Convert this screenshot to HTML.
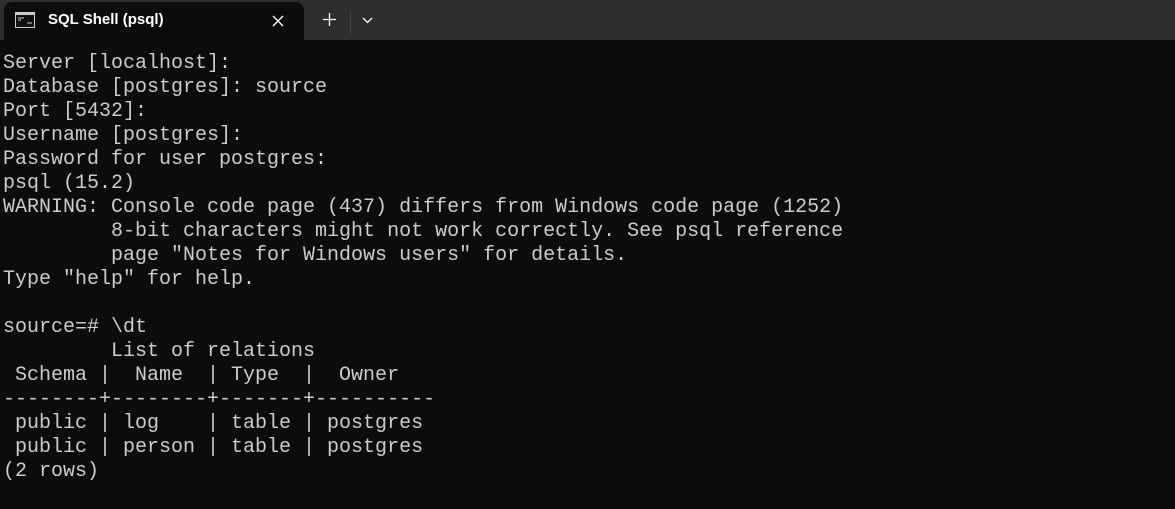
<!DOCTYPE html>
<html><head><meta charset="utf-8"><style>
html,body{margin:0;padding:0;width:1175px;height:509px;background:#0c0c0c;overflow:hidden}
.bar{position:absolute;left:0;top:0;width:1175px;height:40px;background:#2e2e2e}
.tab{position:absolute;left:4px;top:2px;width:300px;height:38px;background:#0c0c0c;border-radius:8px 8px 0 0}
.title{position:absolute;left:44px;top:9px;font:15px "Liberation Sans",sans-serif;color:#fff;font-weight:600}
.term{position:absolute;left:3px;top:52px;margin:0;font:20px/24px "Liberation Mono",monospace;color:#cccccc;white-space:pre}
</style></head><body>
<div class="bar">
<div class="tab">
<svg style="position:absolute;left:11px;top:10px" width="20" height="16" viewBox="0 0 20 16"><rect x="0.5" y="0.5" width="19" height="15" fill="#111" stroke="#ccc"/><rect x="1" y="1" width="18" height="2" fill="#ccc"/><path d="M3 6h6M3 8h3M12 11h5" stroke="#ccc" stroke-width="1"/></svg>
<div class="title">SQL Shell (psql)</div>
<svg style="position:absolute;left:268px;top:13px" width="12" height="12" viewBox="0 0 12 12"><path d="M1 1L11 11M11 1L1 11" stroke="#fff" stroke-width="1.3"/></svg>
</div>
<svg style="position:absolute;left:323px;top:13px" width="13" height="13" viewBox="0 0 13 13"><path d="M6.5 0V13M0 6.5H13" stroke="#fff" stroke-width="1.3"/></svg>
<div style="position:absolute;left:350px;top:10px;width:1px;height:24px;background:#444"></div>
<svg style="position:absolute;left:362px;top:17px" width="11" height="7" viewBox="0 0 11 7"><path d="M1 1L5.5 5.5L10 1" stroke="#fff" stroke-width="1.3" fill="none"/></svg>
</div>
<pre class="term">Server [localhost]:
Database [postgres]: source
Port [5432]:
Username [postgres]:
Password for user postgres:
psql (15.2)
WARNING: Console code page (437) differs from Windows code page (1252)
         8-bit characters might not work correctly. See psql reference
         page "Notes for Windows users" for details.
Type "help" for help.

source=# \dt
         List of relations
 Schema |  Name  | Type  |  Owner
--------+--------+-------+----------
 public | log    | table | postgres
 public | person | table | postgres
(2 rows)
</pre>
</body></html>
